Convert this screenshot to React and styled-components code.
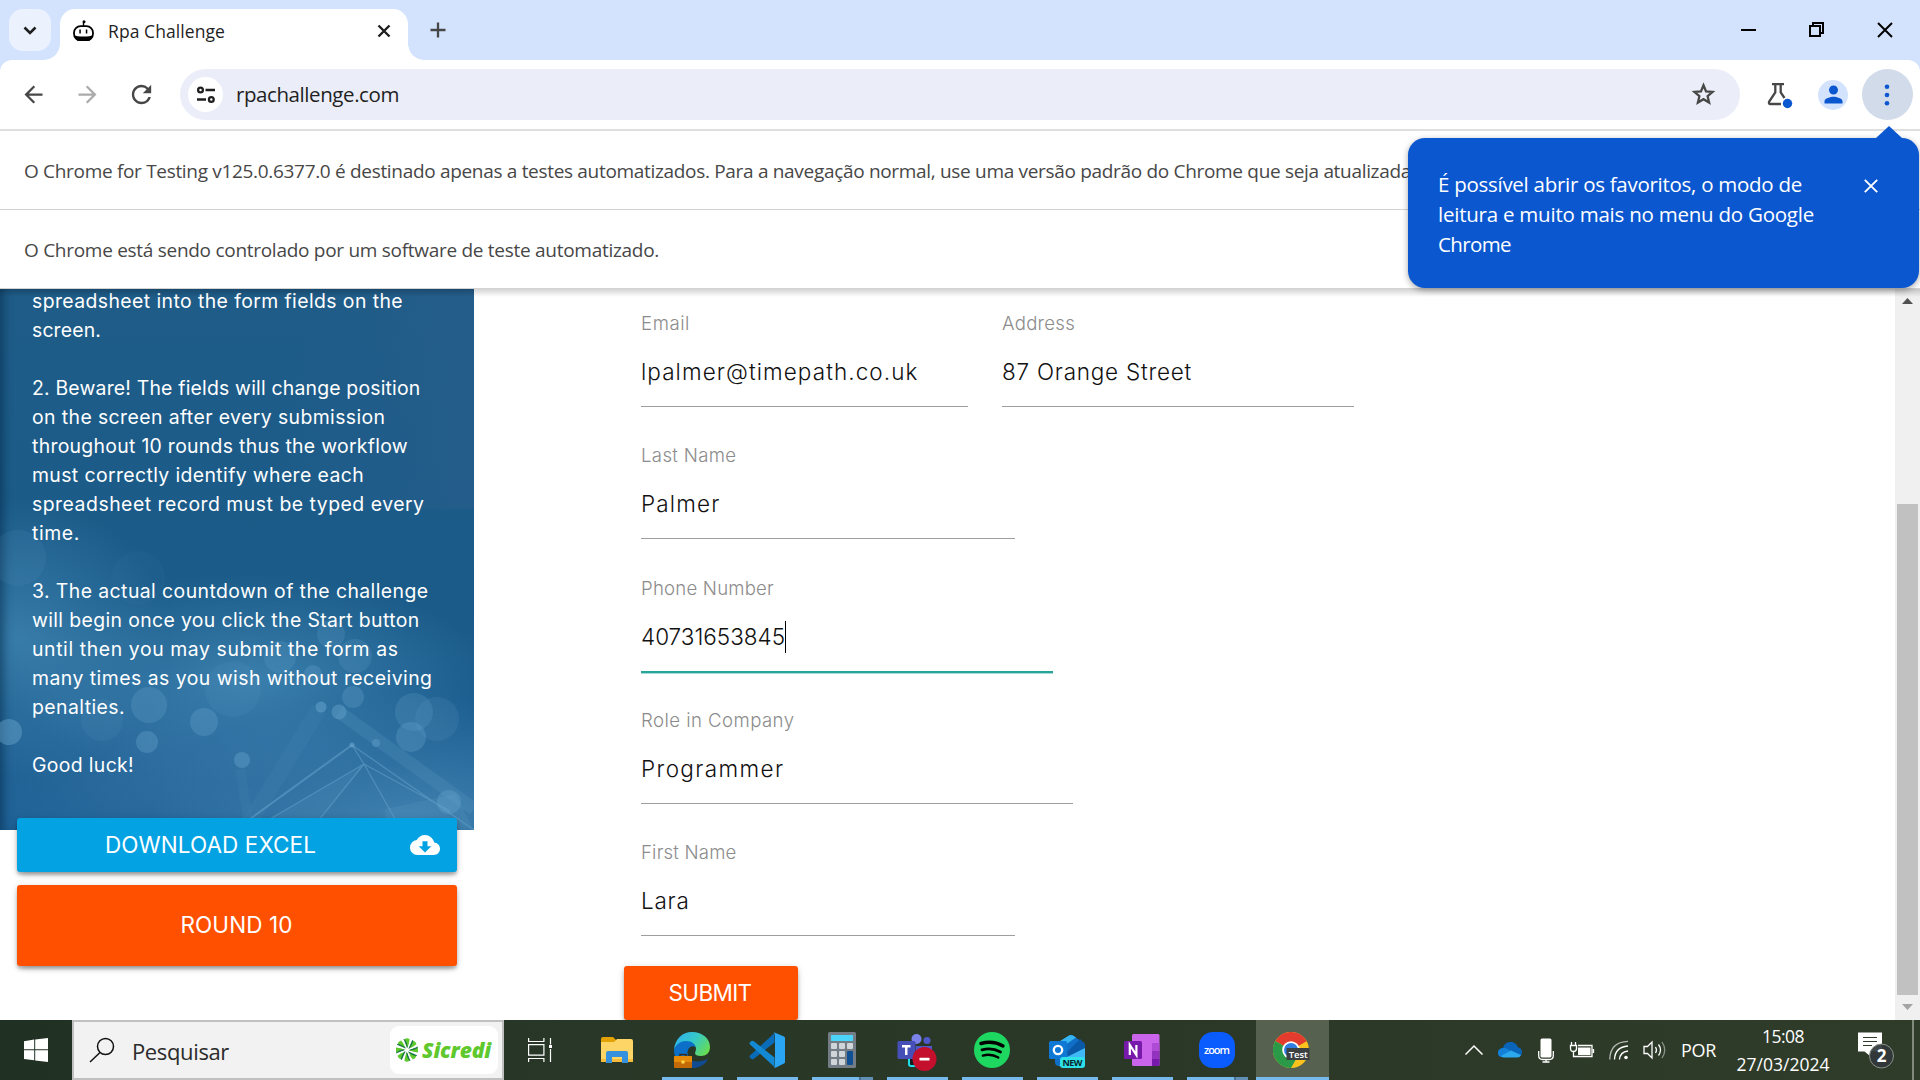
import React, { useLayoutEffect, useRef, useState } from "react";
import styled, { createGlobalStyle, css } from "styled-components";
import {
  MdArrowBack,
  MdArrowForward,
  MdCloudDownload,
  MdPerson,
  MdRefresh,
} from "react-icons/md";

const GlobalStyle = createGlobalStyle`
  * { box-sizing: border-box; }
  html, body { margin: 0; padding: 0; overflow: hidden; }
  body { font-family: "Open Sans", "Noto Sans", sans-serif; background: #fff; }
  svg { display: block; flex: none; }
`;

const Spaced = styled.span`
  display: inline-block;
  white-space: nowrap;
`;

/* Tracks a single line of text so that it spans the given width. */
function Fit({ w, children }) {
  const ref = useRef(null);
  const [spacing, setSpacing] = useState(0);
  useLayoutEffect(() => {
    const natural = ref.current.getBoundingClientRect().width;
    setSpacing((w - natural) / String(children).length);
  }, [w, children]);
  return (
    <Spaced ref={ref} style={{ letterSpacing: `${spacing}px` }}>
      {children}
    </Spaced>
  );
}

const Screen = styled.div`
  width: 1920px;
  height: 1080px;
  display: flex;
  flex-direction: column;
  overflow: hidden;
  background: #fff;
`;

/* ---------- Browser chrome ---------- */

const TabStrip = styled.div`
  height: 60px;
  flex: none;
  display: flex;
  align-items: flex-start;
  padding: 9px 0 0 9px;
  background: #d3e3fd;
`;

const TabSearch = styled.button`
  width: 42px;
  height: 42px;
  padding: 0;
  border: 0;
  border-radius: 14px;
  background: #ebf2fe;
  display: flex;
  align-items: center;
  justify-content: center;
`;

const Tab = styled.div`
  position: relative;
  width: 348px;
  height: 51px;
  margin-left: 9px;
  padding: 0 17px 8px 13px;
  display: flex;
  align-items: center;
  background: #fff;
  border-radius: 15px 15px 0 0;
  &::before,
  &::after {
    content: "";
    position: absolute;
    bottom: 0;
    width: 16px;
    height: 16px;
  }
  &::before {
    left: -16px;
    background: radial-gradient(circle at 0 0, transparent 15.5px, #fff 16px);
  }
  &::after {
    right: -16px;
    background: radial-gradient(circle at 100% 0, transparent 15.5px, #fff 16px);
  }
`;

const TabTitle = styled.div`
  flex: 1;
  margin-left: 14px;
  font-size: 17.5px;
  line-height: 24px;
  color: #1f1f1f;
`;

const NewTab = styled.div`
  width: 60px;
  height: 42px;
  display: flex;
  align-items: center;
  justify-content: center;
`;

const WindowControls = styled.div`
  margin-left: auto;
  height: 42px;
  display: flex;
`;

const WindowButton = styled.div`
  width: 68.5px;
  height: 41px;
  padding-right: ${(p) => p.$nudge || 0}px;
  display: flex;
  align-items: center;
  justify-content: center;
`;

const ToolbarBack = styled.div`
  flex: none;
  background: #d3e3fd;
`;

const Toolbar = styled.div`
  position: relative;
  height: 71px;
  padding: 9px 6px 0;
  display: flex;
  align-items: flex-start;
  background: #fff;
  border-bottom: 2px solid #dfdfdf;
  border-radius: 12px 12px 0 0;
`;

const ToolButton = styled.div`
  width: 54px;
  height: 51px;
  flex: none;
  display: flex;
  align-items: center;
  justify-content: center;
  color: ${(p) => p.$color || "#474747"};
`;

const Omnibox = styled.div`
  width: 1560px;
  height: 51px;
  margin: 0 12px;
  padding: 0 22px 0 8px;
  display: flex;
  align-items: center;
  border-radius: 26px;
  background: #ebeef8;
  color: #474747;
`;

const SiteChip = styled.div`
  width: 35px;
  height: 35px;
  border-radius: 50%;
  background: #fff;
  display: flex;
  align-items: center;
  justify-content: center;
`;

const Url = styled.div`
  flex: 1;
  margin-left: 13px;
  padding-bottom: 2px;
  font-size: 20.5px;
  line-height: 48px;
  color: #1f1f1f;
`;

const Avatar = styled.div`
  width: 30px;
  height: 30px;
  border-radius: 50%;
  background: #d3e3fd;
  color: #0b57d0;
  display: flex;
  align-items: center;
  justify-content: center;
`;

const MenuCircle = styled.div`
  width: 51px;
  height: 51px;
  border-radius: 50%;
  background: #d1dbe9;
  display: flex;
  align-items: center;
  justify-content: center;
`;

const InfoBar = styled.div`
  height: 79px;
  flex: none;
  padding: 1px 0 0 24px;
  font-size: 19px;
  line-height: 78px;
  color: #474747;
  border-bottom: 1px solid #d3d3d3;
  background: #fff;
`;

const Bubble = styled.div`
  position: absolute;
  z-index: 5;
  right: 1px;
  top: 78px;
  width: 511px;
  height: 150px;
  padding: 31px 41px 0 30px;
  display: flex;
  justify-content: space-between;
  align-items: flex-start;
  border-radius: 17px;
  background: #0b57d0;
  color: #fff;
  font-size: 20.5px;
  line-height: 30px;
  box-shadow: 0 2px 6px rgba(0, 0, 0, 0.35);
  svg { margin-top: 10px; }
  &::before {
    content: "";
    position: absolute;
    top: -12px;
    right: 17px;
    border: 13px solid transparent;
    border-top: 0;
    border-bottom: 12px solid #0b57d0;
  }
`;

const BubbleText = styled.div`
  display: flex;
  flex-direction: column;
  align-items: flex-start;
`;

/* ---------- Page ---------- */

const Page = styled.main`
  flex: 1;
  min-height: 0;
  display: flex;
  overflow: hidden;
  background: #fff;
  font-family: Inter, "Open Sans", sans-serif;
`;

const Sidebar = styled.aside`
  width: 474px;
  flex: none;
`;

const Instructions = styled.section`
  position: relative;
  height: 541px;
  overflow: hidden;
  padding-left: 32px;
  background: radial-gradient(ellipse 240px 105px at 250px 390px, rgba(75, 145, 190, 0.65), transparent),
    radial-gradient(ellipse 150px 140px at 20px 350px, rgba(75, 145, 190, 0.6), transparent),
    radial-gradient(ellipse 260px 130px at 410px 535px, rgba(75, 140, 185, 0.75), transparent),
    radial-gradient(ellipse 220px 110px at 170px 490px, rgba(60, 120, 170, 0.55), transparent),
    linear-gradient(100deg, transparent 60%, rgba(50, 95, 140, 0.35)) 0 0 / 100% 220px no-repeat,
    linear-gradient(#1f5c88, #1a5b89 60%, #1d6095);
  box-shadow: inset 8px 0 8px -4px rgba(0, 40, 70, 0.5);
  color: #fff;
`;

const Bokeh = styled.svg`
  position: absolute;
  left: 0;
  top: 0;
`;

const Copy = styled.div`
  position: relative;
  display: flex;
  flex-direction: column;
  font-size: 19.4px;
  line-height: 29px;
`;

const CopyLine = styled.div`
  height: 29px;
  &:first-child {
    height: 27px;
    line-height: 24px;
  }
`;

const buttonBase = css`
  display: flex;
  align-items: center;
  border-radius: 3px;
  color: #fff;
  font-size: 22.5px;
  line-height: 36px;
  box-shadow: 0 3px 3px rgba(0, 0, 0, 0.16), 0 4px 7px -3px rgba(0, 0, 0, 0.35),
    0 1px 7px rgba(0, 0, 0, 0.13);
`;

const DownloadButton = styled.div`
  ${buttonBase}
  position: relative;
  width: 440px;
  height: 54px;
  margin: -12px 0 0 17px;
  padding: 0 17px 0 88px;
  justify-content: space-between;
  background: #02a2e3;
`;

const RoundButton = styled.div`
  ${buttonBase}
  width: 440px;
  height: 81px;
  margin: 13px 0 0 17px;
  padding: 0 1px 1px 0;
  justify-content: center;
  background: #ff5000;
`;

const FormArea = styled.section`
  flex: 1;
  padding: 18px 0 0 167px;
  display: flex;
  flex-direction: column;
  align-items: flex-start;
`;

const FieldRow = styled.div`
  display: flex;
  gap: 34px;
  margin-bottom: 32.3px;
`;

const Field = styled.label`
  width: ${(p) => p.$width}px;
  height: 100px;
  display: block;
  padding-top: 1px;
  border-bottom: 1px solid ${(p) => (p.$focused ? "#26a69a" : "#9e9e9e")};
  box-shadow: ${(p) => (p.$focused ? "0 1px 0 #26a69a, 0 2px 0 #a8dbd7" : "none")};
`;

const FieldLabel = styled.div`
  height: 30px;
  margin-bottom: 11px;
  font-size: 18.6px;
  line-height: 30px;
  font-weight: 300;
  color: #8c8c8c;
`;

const FieldValue = styled.div`
  height: 46px;
  display: flex;
  align-items: center;
  font-size: 22.5px;
  line-height: 46px;
  font-weight: 300;
  color: #111;
`;

const Caret = styled.i`
  width: 1px;
  height: 32px;
  background: #000;
`;

const SubmitButton = styled.div`
  ${buttonBase}
  width: 174px;
  height: 54px;
  margin: -2.5px 0 0 -17px;
  padding-right: 2px;
  justify-content: center;
  background: #ff5000;
`;

const Scrollbar = styled.div`
  width: 25px;
  flex: none;
  padding: 9px 2px 10px;
  display: flex;
  flex-direction: column;
  align-items: center;
  background: #f0f0f0;
`;

const Thumb = styled.div`
  width: 21px;
  height: 491px;
  margin: 200px 0 9px;
  background: #c1c1c1;
`;

const PageShadow = styled.div`
  height: 8px;
  margin-bottom: -8px;
  flex: none;
  position: relative;
  z-index: 2;
  background: linear-gradient(rgba(0, 0, 0, 0.17), transparent);
`;

/* ---------- Taskbar ---------- */

const Taskbar = styled.footer`
  height: 60px;
  flex: none;
  display: flex;
  background: linear-gradient(90deg, #203123, #283727 30%, #2b3827 60%, #303c2a);
  color: #fff;
`;

const StartButton = styled.div`
  width: 72px;
  display: flex;
  align-items: center;
  justify-content: center;
`;

const SearchBox = styled.div`
  width: 432px;
  height: 60px;
  padding: 0 4px 0 15px;
  display: flex;
  align-items: center;
  border: 2px solid #c0c0c0;
  background: #f2f2f2;
`;

const SearchText = styled.div`
  flex: 1;
  margin-left: 17px;
  padding-top: 2px;
  font-size: 22px;
  line-height: 40px;
  color: #2b2b2b;
`;

const SponsorChip = styled.div`
  width: 108px;
  height: 48px;
  padding-left: 6px;
  display: flex;
  align-items: center;
  gap: 4px;
  border-radius: 9px;
  background: #fff;
  color: #5ec82d;
  font: italic 800 21px/30px "Open Sans", sans-serif;
`;

const TaskView = styled.div`
  width: 76px;
  padding-right: 4px;
  display: flex;
  align-items: center;
  justify-content: center;
`;

const AppSlot = styled.div`
  width: 75px;
  height: 60px;
  padding: 12px 7px 0;
  display: flex;
  flex-direction: column;
  align-items: center;
  justify-content: space-between;
  svg { margin-right: 2px; }
  ${(p) =>
    p.$active &&
    css`
      width: 73px;
      margin-left: 1px;
      padding-left: 0;
      padding-right: 0;
      background: #56624f;
    `}
`;

const RunningMark = styled.div`
  width: 100%;
  height: 3px;
  background: ${(p) =>
    p.$stacked
      ? "linear-gradient(90deg, #76b9ed 47px, #4d7190 47px, #4d7190 49px, #628fb5 49px)"
      : "#76b9ed"};
`;

const Tray = styled.div`
  margin-left: auto;
  display: flex;
  align-items: center;
`;

const TrayItem = styled.div`
  width: ${(p) => p.$width}px;
  display: flex;
  justify-content: center;
`;

const Language = styled.div`
  margin-left: 9px;
  font-size: 18px;
  line-height: 30px;
`;

const Clock = styled.div`
  width: 94px;
  margin-left: 20px;
  display: flex;
  flex-direction: column;
  align-items: center;
  font-size: 17.5px;
  line-height: 28px;
`;

const Notifications = styled.div`
  margin-left: 28px;
`;

const DesktopEdge = styled.div`
  width: 8px;
  height: 60px;
  margin-left: 17px;
  border-left: 2px solid #828a7e;
`;

const Cross = ({ size, color, width, inset = 1 }) => (
  <svg width={size} height={size} viewBox={`0 0 ${size} ${size}`}>
    <path
      d={`M${inset} ${inset}L${size - inset} ${size - inset}M${size - inset} ${inset}L${inset} ${size - inset}`}
      stroke={color}
      strokeWidth={width}
    />
  </svg>
);

const RobotIcon = () => (
  <svg width="21" height="22" viewBox="0 0 21 22">
    <path d="M10.5 7V2.8" stroke="#000" strokeWidth="1.4" />
    <circle cx="11" cy="1.8" r="1.5" />
    <rect x="1" y="6.2" width="19" height="14" rx="6.5" fill="#fff" stroke="#000" strokeWidth="1.8" />
    <path d="M1 15c3 2 16 2 19 0-.6 4-2.6 6-6 6H7c-3.500 0-5.500-2-6-6z" />
    <rect x="6.300" y="9.500" width="1.500" height="4" />
    <rect x="12.800" y="9.500" width="1.500" height="4" />
  </svg>
);

const TuneIcon = () => (
  <svg width="20" height="18" viewBox="0 0 20 18" fill="none" stroke="#1f1f1f" strokeWidth="2.300">
    <circle cx="4.500" cy="4" r="2.400" />
    <path d="M9.500 4H19M1 13.500H10" />
    <circle cx="15.300" cy="13.500" r="2.400" />
  </svg>
);

const StarIcon = () => (
  <svg width="29" height="29" viewBox="0 0 24 24" fill="none" stroke="#474747" strokeWidth="1.900">
    <path d="M12 4.400l2.100 5 5.400.5-4.100 3.500 1.250 5.300L12 15.900l-4.650 2.800 1.250-5.300-4.100-3.500 5.400-.5z" />
  </svg>
);

const FlaskIcon = () => (
  <svg width="27" height="28" viewBox="0 0 27 28">
    <path d="M6 3.200H18M9.300 3.500V11.500L3.200 20.500Q2.300 23 4.500 23H15M14.700 3.500V11.500L18.500 17" fill="none" stroke="#474747" strokeWidth="2.300" />
    <circle cx="21.500" cy="22.500" r="4.700" fill="#0b57d0" />
  </svg>
);

const ExplorerIcon = () => (
  <svg width="32" height="36" viewBox="0 0 32 36">
    <path d="M0 7q0-2 2-2h10l3 3v5H0z" fill="#e2a203" />
    <path d="M0 10h13l3-3h14q2 0 2 2v21H0z" fill="#fdd466" />
    <path d="M0 27h32v3H0z" fill="#f7bd3a" />
    <path d="M5 31V21q0-2 2-2h18q2 0 2 2v10h-6v-6H11v6z" fill="#3590dd" />
  </svg>
);

const EdgeIcon = () => (
  <svg width="36" height="36" viewBox="0 0 36 36">
    <defs>
      <linearGradient id="edgeTop" x1="0" x2="1" y1="0.200" y2="0.700">
        <stop offset="0" stopColor="#2fb1ee" />
        <stop offset="0.500" stopColor="#36c9c8" />
        <stop offset="1" stopColor="#68dc50" />
      </linearGradient>
    </defs>
    <path d="M0 18C1 7 8 0 18 0c11 0 18 7 18 15 0 6-4 9-9 9-4 0-6-1-6-3 0-1 1-2 1-4 0-4-4-7-9-7C7 10 2 13 0 18z" fill="url(#edgeTop)" />
    <path d="M0 18c2-6 7-9 12-9 6 0 9 3 9.500 6-4-2-8 1-8 6 0 7 6 11 13 11-3 3-6 4-10 4C7 36 0 28 0 18z" fill="#0c70c8" />
    <path d="M14 22c0 7 7 10 20 5-3 6-9 9-16 9-5-2-6-8-4-14z" fill="#114b91" />
    <rect x="6" y="22.500" width="6" height="3" fill="none" stroke="#3a2a18" strokeWidth="1.500" />
    <rect x="0" y="24" width="18" height="12" rx="1" fill="#c46b08" />
    <path d="M0 25q0-1 1-1h16q1 0 1 1v5H0z" fill="#e68a0a" />
    <rect x="7.500" y="28.500" width="3" height="3" fill="#ffd94a" />
  </svg>
);

const CodeIcon = () => (
  <svg width="36" height="36" viewBox="0 0 36 36">
    <path d="M1 23.500L25.500 1v9.500L4.500 27q-1 .6-2 0l-1.500-1.300q-1-1 0-2.200z" fill="#0a6cb8" />
    <path d="M1 12.500L25.500 35v-9.500L4.500 9q-1-.6-2 0L1 10.300q-1 1 0 2.200z" fill="#1389d4" />
    <path d="M25.500 0.400L35 4.500q1 .5 1 1.500v24q0 1-1 1.500l-8.500 4.300L24.500 35q1.500 0 1.500-2V3q0-2-1.500-2z" fill="#2aa5f3" />
  </svg>
);

const CalcIcon = () => (
  <svg width="28" height="36" viewBox="0 0 28 36">
    <rect width="28" height="36" rx="1.500" fill="#747d85" />
    <rect x="3" y="3" width="22" height="6" fill="#4bd3f8" />
    {[11, 19, 27].map((y) =>
      [3, 11, 19].map((x) =>
        x === 19 && y > 11 ? null : (
          <rect key={`${x}-${y}`} x={x} y={y} width="6" height="6" rx="1" fill="#d0d5da" />
        )
      )
    )}
    <rect x="19" y="19" width="6" height="14" rx="1" fill="#0f4f92" />
  </svg>
);

const TeamsIcon = () => (
  <svg width="40" height="40" viewBox="0 0 40 40">
    <circle cx="19.500" cy="7" r="5" fill="#7b83eb" />
    <circle cx="30" cy="8.500" r="3.500" fill="#5059c9" />
    <path d="M19 14h16v9q0 7-7 7h-9z" fill="#5059c9" />
    <rect x="12" y="25" width="8" height="9" rx="2" fill="#101c20" stroke="#1fe0e6" strokeWidth="2" />
    <rect x="0.500" y="9" width="18" height="18" rx="1.500" fill="#464eb8" />
    <path d="M5 13h8.500v2.400h-3V23H8v-7.600H5z" fill="#fff" />
    <circle cx="27.500" cy="27" r="12" fill="#c4102c" />
    <rect x="22.500" y="25.800" width="10" height="2.600" rx="0.500" fill="#fff" />
  </svg>
);

const SpotifyIcon = () => (
  <svg width="36" height="36" viewBox="0 0 36 36">
    <circle cx="18" cy="18" r="18" fill="#1ed760" />
    <g fill="none" stroke="#000" strokeLinecap="round">
      <path d="M7 11.500c7-2 15.500-1.300 22 2.400" strokeWidth="3.400" />
      <path d="M8 17.800c6-1.700 13-1 18.500 2.200" strokeWidth="2.800" />
      <path d="M8.800 23.600c5-1.400 11-.8 15.500 2" strokeWidth="2.300" />
    </g>
  </svg>
);

const iconText = { fontFamily: '"Open Sans", sans-serif', fontWeight: 700 };

const OutlookIcon = () => (
  <svg width="36" height="36" viewBox="0 0 36 36">
    <path d="M6 13L20 3.500q2-1 4 0L36 12v22H10q-4 0-4-4z" fill="#0f6fc6" />
    <path d="M8 11L20 3.500q2-1 4 0l3 2-16 11z" fill="#35b6f2" />
    <path d="M18 20L31 7l5 5v4L20 27z" fill="#0a58a8" />
    <path d="M36 16v18H10l8-9z" fill="#3fb8f5" />
    <rect x="0" y="9" width="18" height="18" rx="1.500" fill="#0f78d4" />
    <circle cx="9" cy="18" r="4.200" fill="none" stroke="#fff" strokeWidth="2.300" />
    <rect x="11" y="25" width="25" height="11" rx="3" fill="#2ee0e8" />
    <text x="23.500" y="33.800" fontSize="9" textAnchor="middle" textLength="20" fill="#06262b" style={iconText}>NEW</text>
  </svg>
);

const OneNoteIcon = () => (
  <svg width="36" height="36" viewBox="0 0 36 36">
    <rect x="8" y="2" width="27.500" height="32" rx="1.500" fill="#ca64ea" />
    <path d="M28 11h7.500v8H28z" fill="#ae4bd5" />
    <path d="M28 19h7.500v8H28z" fill="#9332bf" />
    <path d="M28 27h7.500v5.500q0 1.500-1.500 1.500h-6z" fill="#7719aa" />
    <rect x="0" y="9" width="18" height="18" rx="1.500" fill="#7719aa" />
    <path d="M5.800 23V13l6.600 10V13" fill="none" stroke="#fff" strokeWidth="2.200" />
  </svg>
);

const ZoomIcon = () => (
  <svg width="36" height="36" viewBox="0 0 36 36">
    <rect width="36" height="36" rx="14" fill="#0b5cff" />
    <text x="18" y="21.800" fontSize="11" textAnchor="middle" textLength="26" fill="#fff" style={{ ...iconText, fontWeight: 600 }}>zoom</text>
  </svg>
);

const ChromeIcon = () => (
  <svg width="37" height="36" viewBox="0 0 37 36">
    <circle cx="18" cy="18" r="18" fill="#fcc31e" />
    <path d="M18 18L2.400 9A18 18 0 0 1 33.600 9z" fill="#e33b2e" />
    <path d="M18 18L2.400 9A18 18 0 0 0 18 36l8-14z" fill="#2a9a48" />
    <path d="M18 9h15.600L18 18z" fill="#e33b2e" />
    <circle cx="18" cy="18" r="8.800" fill="#fff" />
    <circle cx="18" cy="18" r="7" fill="#2f7de1" />
    <rect x="13.500" y="16" width="23" height="12" fill="#3b4043" />
    <text x="25.200" y="25.500" fontSize="9.500" textAnchor="middle" textLength="19" fill="#fff" style={{ ...iconText, fontWeight: 600 }}>Test</text>
  </svg>
);

const SicrediMark = () => (
  <svg width="22" height="24" viewBox="-11 -12 22 24">
    {[0, 45, 90, 135, 180, 225, 270, 315].map((angle) => (
      <g key={angle} transform={`rotate(${angle})`}>
        <path d="M0.300-2.500L-2.600-10.800Q0-12.500 2.600-10.800Q2.200-6 0.300-2.500z" fill="#5ec82d" />
        <path d="M0.300-2.500L-3-10.800Q-0.500-9 0.300-2.500z" fill="#0d6b47" stroke="#0d6b47" strokeWidth="0.600" />
      </g>
    ))}
  </svg>
);

const bokeh = [
  [9, 443, 13, 0.45], [149, 416, 18, 0.25], [204, 433, 14, 0.3], [147, 453, 11, 0.35],
  [242, 471, 8, 0.4], [321, 418, 5.5, 0.5], [339, 423, 7.5, 0.42], [353, 408, 11, 0.28],
  [313, 385, 9, 0.28], [280, 368, 16, 0.2], [355, 367, 17, 0.2], [331, 345, 14, 0.2],
  [414, 423, 19, 0.22], [437, 430, 22, 0.14], [411, 448, 15, 0.3], [376, 454, 4, 0.4],
  [449, 513, 12, 0.35], [352, 456, 2.5, 0.6], [102, 431, 21, 0.1], [18, 269, 28, 0.1],
  [138, 289, 27, 0.05], [233, 400, 28, 0.1],
];

const BokehArt = () => (
  <Bokeh width="474" height="541" viewBox="0 0 474 541">
    <g stroke="#6aa6cf" fill="none">
      <path d="M339 423L474 520" strokeWidth="13" opacity="0.18" />
      <path d="M319 420L245 541" strokeWidth="16" opacity="0.08" />
      <path d="M240 480L250 541" strokeWidth="10" opacity="0.08" />
      <path d="M352 456L250 530" strokeWidth="2" opacity="0.5" />
      <path d="M352 456L474 541M364 475L270 530M364 475L318 532M364 475L450 522M364 475L395 530M352 456L364 475" strokeWidth="1.300" opacity="0.5" />
    </g>
    <path d="M364 475L270 530H318z" fill="#6aa6cf" opacity="0.12" />
    <path d="M385 520L455 505L474 541H385z" fill="#6aa6cf" opacity="0.15" />
    {bokeh.map(([cx, cy, r, o]) => (
      <circle key={`${cx}-${cy}`} cx={cx} cy={cy} r={r} fill="#6aa6cf" opacity={o} />
    ))}
  </Bokeh>
);

const copy = [
  ["spreadsheet into the form fields on the", 371],
  ["screen.", 69],
  null,
  ["2. Beware! The fields will change position", 388.5],
  ["on the screen after every submission", 353.5],
  ["throughout 10 rounds thus the workflow", 376],
  ["must correctly identify where each", 332],
  ["spreadsheet record must be typed every", 392.5],
  ["time.", 48],
  null,
  ["3. The actual countdown of the challenge", 396.5],
  ["will begin once you click the Start button", 387.5],
  ["until then you may submit the form as", 366.5],
  ["many times as you wish without receiving", 400.5],
  ["penalties.", 93],
  null,
  ["Good luck!", 102],
];

const rows = [
  [
    { label: "Email", lw: 49, value: "lpalmer@timepath.co.uk", vw: 277.5, width: 327 },
    { label: "Address", lw: 73, value: "87 Orange Street", vw: 190, width: 352 },
  ],
  [{ label: "Last Name", lw: 95.5, value: "Palmer", vw: 79.5, width: 374 }],
  [{ label: "Phone Number", lw: 133, value: "40731653845", vw: 144, width: 412, focused: true }],
  [{ label: "Role in Company", lw: 153.5, value: "Programmer", vw: 143.5, width: 432 }],
  [{ label: "First Name", lw: 95.5, value: "Lara", vw: 48.5, width: 374 }],
];

const apps = [
  { icon: ExplorerIcon },
  { icon: EdgeIcon, running: true },
  { icon: CodeIcon, running: true },
  { icon: CalcIcon, running: true, stacked: true },
  { icon: TeamsIcon, running: true },
  { icon: SpotifyIcon, running: true },
  { icon: OutlookIcon, running: true },
  { icon: OneNoteIcon, running: true },
  { icon: ZoomIcon, running: true, stacked: true },
  { icon: ChromeIcon, running: true, active: true },
];

export default function App() {
  return (
    <Screen>
      <GlobalStyle />
      <TabStrip>
        <TabSearch aria-label="tabs">
          <svg width="14" height="9" viewBox="0 0 14 9">
            <path d="M1.500 1.500L7 7l5.500-5.500" fill="none" stroke="#1f1f1f" strokeWidth="2.600" />
          </svg>
        </TabSearch>
        <Tab>
          <RobotIcon />
          <TabTitle><Fit w={117}>Rpa Challenge</Fit></TabTitle>
          <Cross size={14} color="#1f1f1f" width={2.4} inset={1.5} />
        </Tab>
        <NewTab>
          <svg width="16" height="16" viewBox="0 0 16 16">
            <path d="M8 0.500v15M0.500 8h15" stroke="#474747" strokeWidth="2.300" />
          </svg>
        </NewTab>
        <WindowControls>
          <WindowButton>
            <svg width="15" height="2"><rect width="15" height="2" /></svg>
          </WindowButton>
          <WindowButton $nudge={2}>
            <svg width="15" height="15" viewBox="0 0 15 15" fill="none" stroke="#000" strokeWidth="2">
              <path d="M1 4H11V14H1zM4 4V1H14V11H11" />
            </svg>
          </WindowButton>
          <WindowButton $nudge={1}>
            <Cross size={16} color="#000" width={2} inset={1} />
          </WindowButton>
        </WindowControls>
      </TabStrip>

      <ToolbarBack>
        <Toolbar>
          <ToolButton><MdArrowBack size={27} /></ToolButton>
          <ToolButton $color="#ababab"><MdArrowForward size={27} /></ToolButton>
          <ToolButton><MdRefresh size={29} /></ToolButton>
          <Omnibox>
            <SiteChip><TuneIcon /></SiteChip>
            <Url><Fit w={163}>rpachallenge.com</Fit></Url>
            <StarIcon />
          </Omnibox>
          <ToolButton><FlaskIcon /></ToolButton>
          <ToolButton><Avatar><MdPerson size={27} /></Avatar></ToolButton>
          <ToolButton>
            <MenuCircle>
              <svg width="6" height="22" viewBox="0 0 6 22" fill="#0b57d0">
                <circle cx="3" cy="2.700" r="2.300" />
                <circle cx="3" cy="11" r="2.300" />
                <circle cx="3" cy="19.300" r="2.300" />
              </svg>
            </MenuCircle>
          </ToolButton>
          <Bubble>
            <BubbleText>
              <Fit w={364}>É possível abrir os favoritos, o modo de</Fit>
              <Fit w={376}>leitura e muito mais no menu do Google</Fit>
              <Fit w={73}>Chrome</Fit>
            </BubbleText>
            <Cross size={14} color="#fff" width={1.9} inset={0.8} />
          </Bubble>
        </Toolbar>
      </ToolbarBack>

      <InfoBar>
        <Fit w={1387}>
          O Chrome for Testing v125.0.6377.0 é destinado apenas a testes automatizados. Para a navegação normal, use uma versão padrão do Chrome que seja atualizada
        </Fit>
      </InfoBar>
      <InfoBar>
        <Fit w={635}>O Chrome está sendo controlado por um software de teste automatizado.</Fit>
      </InfoBar>

      <PageShadow />
      <Page>
        <Sidebar>
          <Instructions>
            <BokehArt />
            <Copy>
              {copy.map((line, i) => (
                <CopyLine key={i}>{line && <Fit w={line[1]}>{line[0]}</Fit>}</CopyLine>
              ))}
            </Copy>
          </Instructions>
          <DownloadButton>
            <Fit w={211}>DOWNLOAD EXCEL</Fit>
            <MdCloudDownload size={30} />
          </DownloadButton>
          <RoundButton><Fit w={112}>ROUND 10</Fit></RoundButton>
        </Sidebar>
        <FormArea>
          {rows.map((row, i) => (
            <FieldRow key={i}>
              {row.map((f) => (
                <Field key={f.label} $width={f.width} $focused={f.focused}>
                  <FieldLabel><Fit w={f.lw}>{f.label}</Fit></FieldLabel>
                  <FieldValue>
                    <Fit w={f.vw}>{f.value}</Fit>
                    {f.focused && <Caret />}
                  </FieldValue>
                </Field>
              ))}
            </FieldRow>
          ))}
          <SubmitButton><Fit w={83}>SUBMIT</Fit></SubmitButton>
        </FormArea>
        <Scrollbar>
          <svg width="11" height="6" viewBox="0 0 11 6"><path d="M0 6L5.500 0L11 6z" fill="#505050" /></svg>
          <Thumb />
          <svg width="11" height="6" viewBox="0 0 11 6"><path d="M0 0L5.500 6L11 0z" fill="#a3a3a3" /></svg>
        </Scrollbar>
      </Page>

      <Taskbar>
        <StartButton>
          <svg width="24" height="24" viewBox="0 0 24 24" fill="#fff">
            <path d="M0 3.300L10.200 1.600V11.300H0zM11.200 1.400L24 0V11.300H11.200zM0 12.300H10.200V22.300L0 20.900zM11.200 12.300H24V24L11.200 22.400z" />
          </svg>
        </StartButton>
        <SearchBox>
          <svg width="26" height="26" viewBox="0 0 26 26" fill="none" stroke="#111" strokeWidth="1.500">
            <circle cx="16.500" cy="9.500" r="8" />
            <path d="M11 15.500L1 25" />
          </svg>
          <SearchText><Fit w={97}>Pesquisar</Fit></SearchText>
          <SponsorChip>
            <SicrediMark />
            <Fit w={69}>Sicredi</Fit>
          </SponsorChip>
        </SearchBox>
        <TaskView>
          <svg width="24" height="24" viewBox="0 0 24 24" fill="none" stroke="#fff" strokeWidth="1.200">
            <path d="M.6 0v3.500h15.300V0M.6 24v-3.500h15.300V24M.6 6.600h15.300v10.600H.6zM22.500 0v6.500M22.500 11v13" />
            <rect x="21" y="7" width="3" height="3" fill="#fff" stroke="none" />
          </svg>
        </TaskView>
        {apps.map(({ icon: Icon, running, stacked, active }, i) => (
          <AppSlot key={i} $active={active}>
            <Icon />
            {running && <RunningMark $stacked={stacked} />}
          </AppSlot>
        ))}
        <Tray>
          <TrayItem $width={36}>
            <svg width="20" height="12" viewBox="0 0 20 12"><path d="M1.500 10.500L10 2l8.500 8.500" fill="none" stroke="#fff" strokeWidth="1.500" /></svg>
          </TrayItem>
          <TrayItem $width={36}>
            <svg width="24" height="16" viewBox="0 0 24 16">
              <path d="M5 15C1 15 0 13 0 10.500S2 6 5 6C6 2 9 0 12.500 0 16 0 19 2 20 5.500c2.500 0 4 2 4 4.500 0 3-2 5-4.500 5z" fill="#0a64b8" />
              <path d="M5 6C8 5.500 10 7 13 9L3 15Q0 14 0 10.500 0 7 5 6z" fill="#1380d8" />
              <path d="M3 14L13 8.500L23 13q-1 2.500-4 2.500H6q-2 0-3-1.500z" fill="#2ba8ee" />
            </svg>
          </TrayItem>
          <TrayItem $width={36}>
            <svg width="16" height="25" viewBox="0 0 16 25">
              <rect x="2.500" y="0.500" width="11" height="19" rx="1.500" fill="#fff" />
              <path d="M.7 13v4.500q0 4 4 4h6.600q4 0 4-4V13M8 21v3M4.500 24h7" fill="none" stroke="#fff" strokeWidth="1.300" />
            </svg>
          </TrayItem>
          <TrayItem $width={36}>
            <svg width="26" height="18" viewBox="0 0 26 18">
              <path d="M2.500 1v3M6.500 1v3M1.500 4.500h6v3q0 3-3 3t-3-3zM4.500 10v5.500h18.500V4.500H9M24.500 8v4" fill="none" stroke="#fff" strokeWidth="1.300" />
              <rect x="9" y="6.500" width="12.500" height="7.500" fill="#fff" />
            </svg>
          </TrayItem>
          <TrayItem $width={37}>
            <svg width="20" height="20" viewBox="0 0 20 20" fill="none" stroke="#fff" strokeWidth="1.300">
              <path d="M.8 19.500Q1 2 19 1.300" opacity=".65" />
              <path d="M5.500 19.500Q6 7 19 6M10.500 19.500Q11 12 19 11" />
              <circle cx="17" cy="17.500" r="1.800" fill="#fff" stroke="none" />
            </svg>
          </TrayItem>
          <TrayItem $width={35}>
            <svg width="24" height="20" viewBox="0 0 24 20" fill="none" stroke="#fff" strokeWidth="1.300">
              <path d="M1 6.500h3.500L9 2v16l-4.500-4.500H1zM12.500 7q2 3 0 6M15.500 4.500q4 5.500 0 11" />
              <path d="M19 2q5.500 8 0 16" opacity=".45" />
            </svg>
          </TrayItem>
          <Language><Fit w={35}>POR</Fit></Language>
          <Clock>
            <Fit w={42}>15:08</Fit>
            <Fit w={93}>27/03/2024</Fit>
          </Clock>
          <Notifications>
            <svg width="37" height="38" viewBox="0 0 37 38">
              <path d="M0 1.500h24v19H12v4.500L6.500 20.500H0z" fill="#fff" />
              <path d="M5 6.500h14M5 10.500h14M5 14.500h9" stroke="#2f3b29" strokeWidth="1.200" />
              <circle cx="23.500" cy="25" r="12" fill="#33383a" fillOpacity=".93" stroke="#8b9188" strokeWidth="1" />
              <text x="23.500" y="31" fontSize="17" textAnchor="middle" fill="#fff" style={iconText}>2</text>
            </svg>
          </Notifications>
          <DesktopEdge />
        </Tray>
      </Taskbar>
    </Screen>
  );
}
